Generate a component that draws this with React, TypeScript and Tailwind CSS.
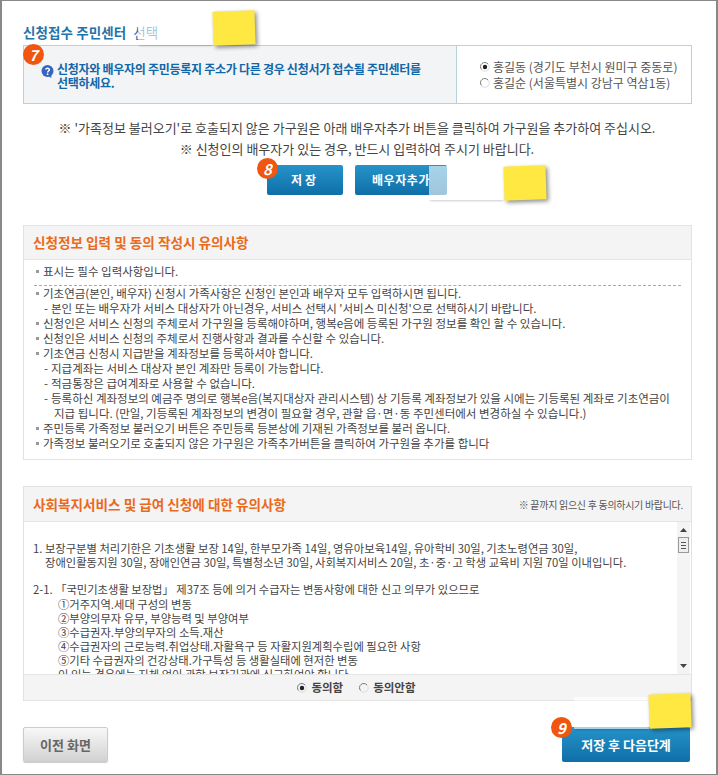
import type { ReactNode } from "react";

const font = { fontFamily: '"Noto Sans CJK KR", "Liberation Sans", sans-serif' };

function Badge({ n, className }: { n: string; className: string }) {
  return (
    <div className={"absolute w-[21px] h-[21px] rounded-full bg-[#f0560f] text-white text-[15px] font-bold italic flex items-center justify-center leading-none " + className}>
      {n}
    </div>
  );
}

function Sticker({ className, white, yellow }: { className: string; white: string; yellow: string }) {
  return (
    <div className={"absolute flex items-start " + className}>
      <div className={"bg-white/60 shadow-[0_2px_2px_-1px_rgba(0,0,0,0.2)] " + white} />
      <div className={"bg-[#ffe842] -rotate-2 shadow-[2px_2px_4px_rgba(0,0,0,0.45)] " + yellow} />
    </div>
  );
}

function Radio({ on }: { on?: boolean }) {
  return (
    <svg width="10" height="10" viewBox="0 0 10 10" className="shrink-0">
      <path d="M1.5 7.5A4 4 0 0 1 8 2" fill="none" stroke="#777" strokeWidth="1" />
      <path d="M8 2A4 4 0 0 1 2 8" fill="none" stroke="#ddd" strokeWidth="1" />
      {on && <circle cx="5" cy="5" r="2.2" fill="#222" />}
    </svg>
  );
}

function Help() {
  return (
    <svg width="13" height="13" viewBox="0 0 13 13" className="shrink-0 mr-[3px] mt-[3px]">
      <circle cx="6.5" cy="6" r="6" fill="#3565c0" />
      <path d="M7 11L10 10.5L10.5 13z" fill="#3565c0" />
      <path d="M4.6 4.6A2 2 0 0 1 8.4 4.8C8.4 6 6.6 6 6.6 7.4" fill="none" stroke="#fff" strokeWidth="1.5" />
      <circle cx="6.6" cy="9.2" r="0.9" fill="#fff" />
    </svg>
  );
}

function Row({ children, kind = "dot", className = "h-[15px]" }: { children: ReactNode; kind?: "dot" | "sub" | "cont"; className?: string }) {
  const pad = kind === "dot" ? "pl-[12px]" : kind === "sub" ? "pl-[20px]" : "pl-[30px]";
  return (
    <div className={"flex items-start leading-[14px] whitespace-nowrap " + pad + " " + className}>
      {kind === "dot" && <span className="w-[3px] h-[3px] bg-[#999] mt-[6px] mr-[4px] shrink-0" />}
      {kind === "sub" && <span className="mr-[3px]">-</span>}
      <span>{children}</span>
    </div>
  );
}

export default function App() {
  return (
    <div style={font} className="relative w-[718px] h-[775px] bg-white border-2 border-[#888] border-t-[1px] border-b-[1px] overflow-hidden text-[#333] flex flex-col px-[21px]">
      <div className="h-[44px] flex items-end pb-[4px] text-[13.5px] font-bold leading-[18px]">
        <span className="text-[#1f74ab] tracking-[0.1px]">신청접수 주민센터</span>
        <span className="text-[#1f74ab] font-normal ml-[7px]">선택</span>
      </div>

      <div className="h-[59px] w-[669px] border border-[#b6d2dd] flex">
        <div className="w-[433px] bg-[#f3f4f6] border-r border-[#b6d2dd] flex items-start pl-[17px] pt-[16px]">
          <Help />
          <div className="text-[12px] font-bold leading-[14px] text-[#1167a8] tracking-[-0.28px] w-[368px]">
            신청자와 배우자의 주민등록지 주소가 다른 경우 신청서가 접수될 주민센터를 선택하세요.
          </div>
        </div>
        <div className="flex-1 pl-[23px] flex flex-col justify-center text-[12px] leading-[16px] text-[#555]">
          <div className="flex items-center gap-[3px]"><Radio on />홍길동 (경기도 부천시 원미구 중동로)</div>
          <div className="flex items-center gap-[3px]"><Radio />홍길순 (서울특별시 강남구 역삼1동)</div>
        </div>
      </div>

      <div className="mt-[13px] pr-[4px] text-center text-[13px] leading-[21px] text-[#444] whitespace-nowrap">
        <div>※ '가족정보 불러오기'로 호출되지 않은 가구원은 아래 배우자추가 버튼을 클릭하여 가구원을 추가하여 주십시오.</div>
        <div>※ 신청인의 배우자가 있는 경우, 반드시 입력하여 주시기 바랍니다.</div>
      </div>

      <div className="mt-[6px] h-[30px] flex pl-[244px] gap-[12px] text-white text-[12px] font-bold">
        <div className="w-[76px] rounded-[2px] tracking-[3px] bg-gradient-to-b from-[#2593c9] to-[#0f6fa8] flex items-center justify-center">저장</div>
        <div className="w-[92px] rounded-[2px] tracking-[0.6px] bg-gradient-to-b from-[#2593c9] to-[#0f6fa8] flex items-center justify-center">배우자추가</div>
      </div>

      <div className="mt-[30px] w-[669px] h-[235px] border border-[#e2e2e2] flex flex-col">
        <div className="h-[34px] bg-[#f4f4f4] border-b border-[#e4e4e4] flex items-center pl-[9px] text-[13.6px] font-bold text-[#ea6a1c]">
          신청정보 입력 및 동의 작성시 유의사항
        </div>
        <div className="pt-[4px] text-[11.5px] text-[#444]">
          <Row className="h-[21px]">표시는 필수 입력사항입니다.</Row>
          <div className="mx-[10px] border-t border-dashed border-[#aaa]" />
          <Row>기초연금(본인, 배우자) 신청시 가족사항은 신청인 본인과 배우자 모두 입력하시면 됩니다.</Row>
          <Row kind="sub">본인 또는 배우자가 서비스 대상자가 아닌경우, 서비스 선택시 '서비스 미신청'으로 선택하시기 바랍니다.</Row>
          <Row>신청인은 서비스 신청의 주체로서 가구원을 등록해야하며, 행복e음에 등록된 가구원 정보를 확인 할 수 있습니다.</Row>
          <Row>신청인은 서비스 신청의 주체로서 진행사항과 결과를 수신할 수 있습니다.</Row>
          <Row>기초연금 신청시 지급받을 계좌정보를 등록하셔야 합니다.</Row>
          <Row kind="sub">지급계좌는 서비스 대상자 본인 계좌만 등록이 가능합니다.</Row>
          <Row kind="sub">적금통장은 급여계좌로 사용할 수 없습니다.</Row>
          <Row kind="sub">등록하신 계좌정보의 예금주 명의로 행복e음(복지대상자 관리시스템) 상 기등록 계좌정보가 있을 시에는 기등록된 계좌로 기초연금이</Row>
          <Row kind="cont">지급 됩니다. (만일, 기등록된 계좌정보의 변경이 필요할 경우, 관할 읍·면·동 주민센터에서 변경하실 수 있습니다.)</Row>
          <Row>주민등록 가족정보 불러오기 버튼은 주민등록 등본상에 기재된 가족정보를 불러 옵니다.</Row>
          <Row>가족정보 불러오기로 호출되지 않은 가구원은 가족추가버튼을 클릭하여 가구원을 추가를 합니다</Row>
        </div>
      </div>

      <div className="mt-[26px] w-[669px] h-[215px] border border-[#e2e2e2] flex flex-col">
        <div className="h-[35px] bg-[#f4f4f4] border-b border-[#e4e4e4] flex items-center justify-between pl-[9px] pr-[8px]">
          <span className="text-[13.6px] font-bold text-[#ea6a1c]">사회복지서비스 및 급여 신청에 대한 유의사항</span>
          <span className="text-[10px] text-[#555] tracking-[-0.3px]">※ 끝까지 읽으신 후 동의하시기 바랍니다.</span>
        </div>
        <div className="h-[153px] flex overflow-hidden border-b border-[#e4e4e4]">
          <div className="flex-1 pl-[9px] pt-[19px] text-[11.3px] leading-[14px] text-[#444] whitespace-nowrap">
            <div className="h-[14px]">1. 보장구분별 처리기한은 기초생활 보장 14일, 한부모가족 14일, 영유아보육14일, 유아학비 30일, 기초노령연금 30일,</div>
            <div className="h-[15px] pl-[12px]">장애인활동지원 30일, 장애인연금 30일, 특별청소년 30일, 사회복지서비스 20일, 초·중·고 학생 교육비 지원 70일 이내입니다.</div>
            <div className="h-[12px]" />
            <div className="h-[15px]">2-1. 「국민기초생활 보장법」 제37조 등에 의거 수급자는 변동사항에 대한 신고 의무가 있으므로</div>
            <div className="pl-[25px]">
              <div className="h-[14px]">①거주지역.세대 구성의 변동</div>
              <div className="h-[14px]">②부양의무자 유무, 부양능력 및 부양여부</div>
              <div className="h-[14px]">③수급권자.부양의무자의 소득.재산</div>
              <div className="h-[14px]">④수급권자의 근로능력.취업상태.자활욕구 등 자활지원계획수립에 필요한 사항</div>
              <div className="h-[14px]">⑤기타 수급권자의 건강상태.가구특성 등 생활실태에 현저한 변동</div>
              <div className="h-[14px]">이 있는 경우에는 지체 없이 관할 보장기관에 신고하여야 합니다.</div>
            </div>
          </div>
          <div className="w-[13px] mr-[1px] bg-[#f4f4f4] flex flex-col items-center relative">
            <svg width="7" height="4" viewBox="0 0 7 4" className="mt-[6px]"><path d="M3.5 0L7 4H0z" fill="#444" /></svg>
            <div className="mt-[5px] w-[11px] h-[16px] border border-[#999] bg-[#eee] flex flex-col items-center justify-center gap-[2px]">
              <div className="w-[5px] h-px bg-[#555]" /><div className="w-[5px] h-px bg-[#555]" /><div className="w-[5px] h-px bg-[#555]" />
            </div>
            <svg width="7" height="4" viewBox="0 0 7 4" className="absolute bottom-[6px]"><path d="M0 0H7L3.5 4z" fill="#444" /></svg>
          </div>
        </div>
        <div className="flex-1 bg-[#f4f4f4] flex items-center justify-center text-[11.5px] font-bold text-[#444] pr-[2px]">
          <label className="flex items-center gap-[4px]"><Radio on />동의함</label>
          <label className="flex items-center gap-[4px] ml-[16px]"><Radio />동의안함</label>
        </div>
      </div>

      <div className="mt-[26px] w-[669px] flex items-start justify-between pr-[2px]">
        <div className="w-[85px] h-[35px] rounded-[2px] border border-[#ccc] bg-gradient-to-b from-[#f8f8f8] to-[#d2d2d2] flex items-center justify-center text-[13px] font-bold text-[#666] shadow-[0_1px_1px_rgba(0,0,0,0.2)]">
          이전 화면
        </div>
        <div className="w-[128px] h-[35px] rounded-[2px] bg-gradient-to-b from-[#2593c9] to-[#0f6fa8] flex items-center justify-center text-[13px] font-bold text-white">
          저장 후 다음단계
        </div>
      </div>

      <Sticker className="left-[136px] top-[10px]" white="w-[75px] h-[34px]" yellow="w-[42px] h-[34px]" />
      <Sticker className="left-[427px] top-[165px]" white="w-[75px] h-[34px]" yellow="w-[42px] h-[34px]" />
      <Sticker className="left-[572px] top-[693px]" white="w-[75px] h-[32px] mt-[3px]" yellow="w-[42px] h-[34px]" />

      <Badge n="7" className="left-[21px] top-[43px]" />
      <Badge n="8" className="left-[255px] top-[157px]" />
      <Badge n="9" className="left-[549px] top-[716px]" />
    </div>
  );
}
